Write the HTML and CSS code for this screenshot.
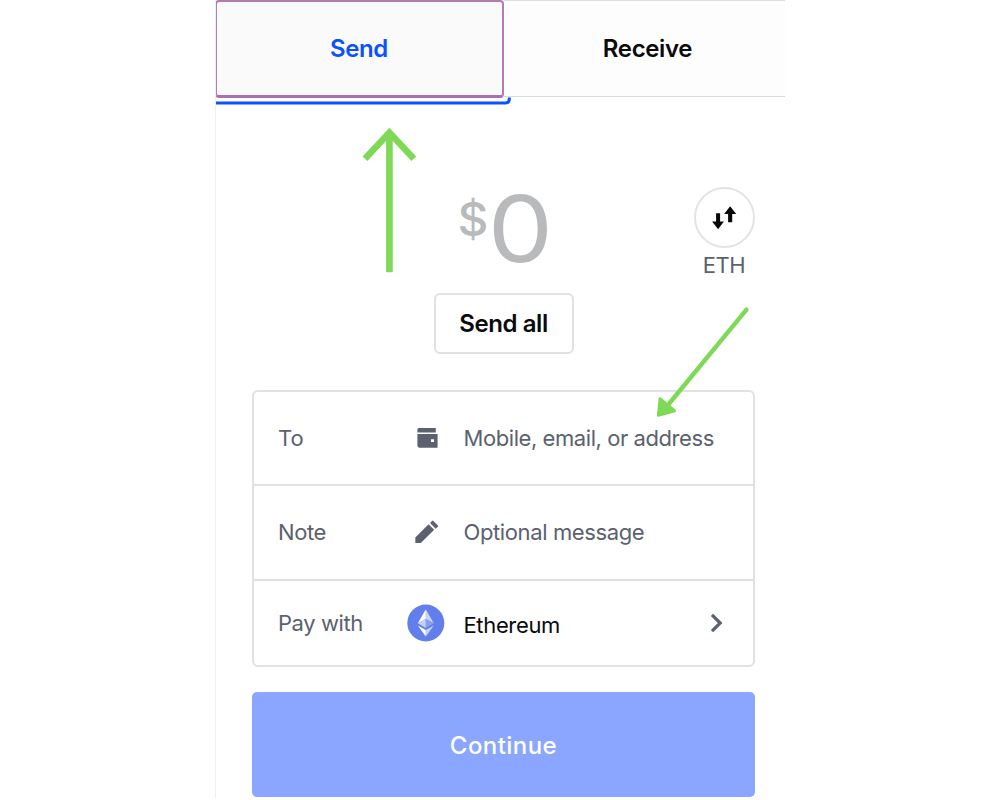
FILE: index.html
```html
<!DOCTYPE html>
<html lang="en">
<head>
<meta charset="utf-8">
<title>Send</title>
<link rel="stylesheet" href="styles.css">
</head>
<body>
<main class="panel">
  <nav class="tabs">
    <div class="tab tab-active">Send<svg class="underline" width="297" height="9" viewBox="0 0 297 9"><path d="M0 7H290.5Q294.3 7 294.3 3V1.5" fill="none" stroke="#0a52fb" stroke-width="3"/></svg></div>
    <div class="tab tab-receive"><span>Receive</span></div>
  </nav>
  <section class="amount-row">
    <div class="amount"><span class="currency">$</span><span class="value">0</span></div>
    <div class="swap">
      <div class="swap-circle"><svg width="26" height="26" viewBox="0 0 26 26" fill="#050708"><path d="M5.1 8.2H9.1V16.5H12.9L7.1 24.2L1.1 16.5H5.1Z"/><path d="M17.1 17.3V9H13.2L19.1 1.2L25.2 9H21.2V17.3Z"/></svg></div>
      <span class="swap-label">ETH</span>
    </div>
  </section>
  <button class="send-all">Send all</button>
  <section class="form">
    <div class="row row-to">
      <span class="label">To</span>
      <span class="icon"><svg width="38" height="38" viewBox="0 0 38 38" fill="#5b616e"><path d="M12 9H28.8V13.6H10.4V10.6Q10.4 9 12 9Z"/><path fill-rule="evenodd" d="M10.4 14.9H30.6V28.7H13.2Q10.4 28.7 10.4 25.9ZM24 20.2V22.9H27V20.2Z"/></svg></span>
      <span class="field f-to">Mobile, email, or address</span>
    </div>
    <div class="row row-note">
      <span class="label">Note</span>
      <span class="icon"><svg width="38" height="38" viewBox="0 0 38 38" fill="#5b616e"><path d="M8.3 30V24.4L21.6 11.2L27.2 16.8L13.8 30Z"/><path d="M23 9.9L25 7.9Q25.7 7.2 26.4 7.9L31 12.4Q31.6 13 31 13.6L28.7 15.7Z"/></svg></span>
      <span class="field f-note">Optional message</span>
    </div>
    <div class="row row-pay">
      <span class="label">Pay with</span>
      <span class="icon"><svg width="38" height="38" viewBox="0 0 38 38"><circle cx="18.8" cy="19" r="18.5" fill="#627eea"/><path d="M18.8 5.2V15.1L26.8 19.2Z" fill="#c6d1f8"/><path d="M18.8 5.2V15.1L10.8 19.2Z" fill="#fff"/><path d="M18.8 15.1L10.8 19.2L18.8 24Z" fill="#c6d1f8"/><path d="M18.8 15.1L26.8 19.2L18.8 24Z" fill="#899eee"/><path d="M10.8 21.4L18.8 26V32.5Z" fill="#fff"/><path d="M26.8 21.4L18.8 26V32.5Z" fill="#c6d1f8"/></svg></span>
      <span class="field f-pay">Ethereum</span>
      <svg class="chevron" width="16" height="22" viewBox="0 0 16 22"><path d="M3 2.8L11.2 11L3 19.2" fill="none" stroke="#5b616e" stroke-width="3.2"/></svg>
    </div>
  </section>
  <button class="continue">Continue</button>
</main>
<svg class="annotations" width="1000" height="800" viewBox="0 0 1000 800">
  <path d="M389.4 272.2V133M365 158.8L389.4 132.5L413.8 158.8" fill="none" stroke="#7ed957" stroke-width="6.6"/>
  <path d="M746.5 309.7L668 405" stroke="#7ed957" stroke-width="4.4" stroke-linecap="round"/>
  <path d="M658.3 415.3L660 398.6L674.7 410.8Z" fill="#7ed957" stroke="#7ed957" stroke-width="2.8" stroke-linejoin="round"/>
</svg>
</body>
</html>
```
FILE: styles.css
```css
* { box-sizing: border-box; }
body { margin: 0; background: #fff; font-family: Inter, "Liberation Sans", sans-serif; color: #0a0b0d; }
button { font-family: inherit; padding: 0; display: block; }
.panel { width: 570px; height: 798px; margin-left: 215px; border-left: 1px solid #efeff2; overflow: hidden; }
.tabs { display: flex; height: 98px; margin-left: -1px; }
.tab { display: flex; align-items: center; justify-content: center; font-size: 24px; font-weight: 600; }
.tab-active { position: relative; width: 289px; background: #fafafa; border: 2px solid #b27bb1; border-bottom: 3px solid #ac6fab; border-radius: 4px; color: #0a52fb; letter-spacing: -.4px; padding: 0 1px 0 0; }
.underline { position: absolute; left: -2px; top: 93.5px; }
.tab-receive { width: 281px; height: 97px; background: #fdfdfd; border-top: 1px solid #dedfe4; border-bottom: 1px solid #d8d9de; padding: 0 0 0 6px; letter-spacing: -.35px; }
.amount-row { display: grid; grid-template-columns: 1fr 60px; margin: 89px 31px 0 0; height: 106px; }
.amount { display: flex; justify-content: center; align-items: flex-start; color: #b9babc; padding-left: 98px; }
.currency { font-size: 46px; line-height: 56px; margin: 4px 3px 0 -4px; font-weight: 500; transform: scaleX(1.04); }
.value { font-size: 92.5px; font-weight: 400; line-height: 83px; letter-spacing: -3px; transform: scaleX(1.12); }
.swap { display: flex; flex-direction: column; align-items: center; }
.swap-circle { width: 61px; height: 61px; border: 2px solid #e2e3e7; border-radius: 50%; display: flex; align-items: center; justify-content: center; }
.swap-label { font-size: 22px; line-height: 34px; color: #5b616e; letter-spacing: -.5px; }
.send-all { width: 140px; height: 61px; margin-left: 217.5px; border: 2px solid #e0e1e5; border-radius: 6px; background: #fff; font-size: 24px; font-weight: 600; color: #0a0b0d; letter-spacing: -.4px; }
.form { margin: 36px 0 0 36px; width: 503px; height: 277px; border: 2px solid #e0e1e4; border-radius: 6px; }
.row { display: grid; grid-template-columns: 129px 56.5px 1fr 20px; align-items: center; padding: 0 24px; border-bottom: 2px solid #e0e1e4; font-size: 22px; color: #5b616e; }
.row-to { height: 94px; }
.row-note { height: 95px; padding-bottom: 1px; }
.row-pay { height: 84px; border-bottom: 0; }
.icon { display: flex; }
.label, .field { white-space: nowrap; letter-spacing: -.43px; }
.row-to .label { letter-spacing: 0; }
.f-note { letter-spacing: -.38px; }
.f-pay { color: #0a0b0d; padding-top: 3px; letter-spacing: -.35px; }
.continue { margin: 25px 0 0 36px; width: 503px; height: 105px; border: 0; border-radius: 5px; background: #8aa6ff; color: #fff; font-size: 24px; font-weight: 500; letter-spacing: .45px; padding-top: 2px; }
.annotations { position: absolute; left: 0; top: 0; pointer-events: none; }
```
